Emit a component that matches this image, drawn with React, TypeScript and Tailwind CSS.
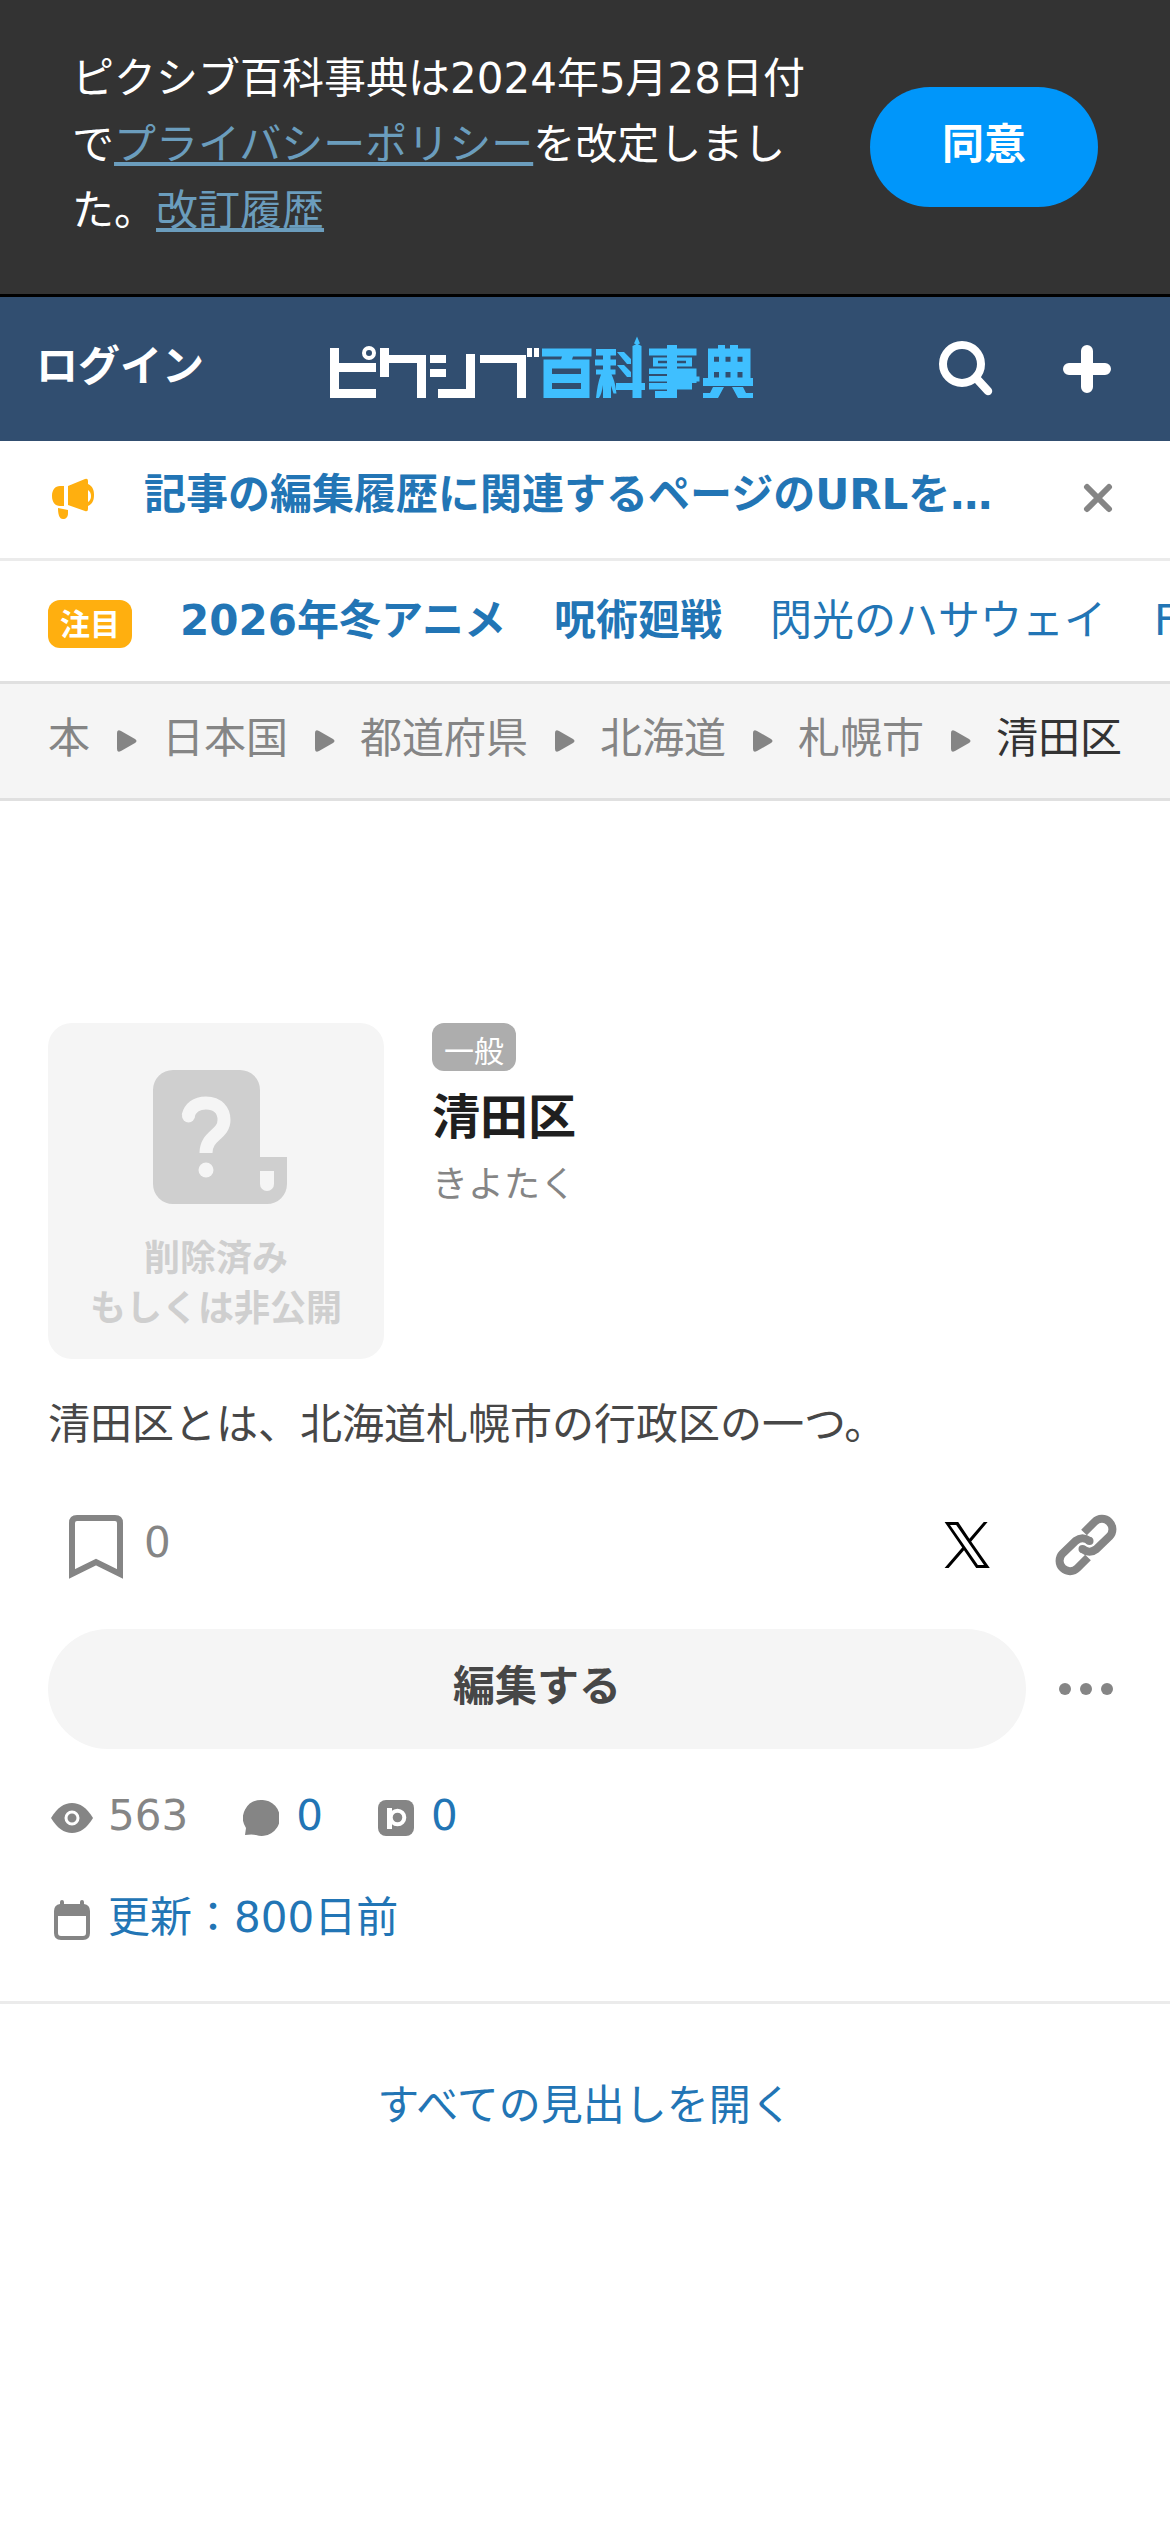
import { ReactNode } from 'react';

const trends = [
  { name: '2026年冬アニメ', hot: true },
  { name: '呪術廻戦', hot: true },
  { name: '閃光のハサウェイ', hot: false },
  { name: 'Fate', hot: false },
];

const crumbs = ['本', '日本国', '都道府県', '北海道', '札幌市'];

const Logo = () => (
  <svg width="430" height="66" viewBox="0 0 430 66" className="block">
    <g fill="#fff">
      <path d="M3 12h9v15h37v9H12v17h37v9H3z" />
      <circle cx="42" cy="17" r="5" fill="none" stroke="#fff" strokeWidth="4" />
      <path d="M53 12h9v7h37v43h-9V27H62v14h-9z" />
      <path d="M103 19h16v8h-16zM103 33h16v8h-16zM139 18h9v44h-37v-9h28z" />
      <path d="M153 19h46v43h-9V27h-37zM200 12h5v9h-5zM207 12h5v9h-5z" />
    </g>
    <g fill="#3fbfff">
      <path
        fillRule="evenodd"
        d="M215 12.500h49.500v8H246l-1 3h17.500V62h-46V23.500H234l1-3h-20zM225 32.500V38h29v-5.500zM225 47v6h29v-6z"
      />
      <path d="M269 13h20v6.500h-5.500v4h5.500v6h-5.500v4h5v5h-4c3 6 4 11 5 19h-3l-2.500-8V62H276V49c-1 6-2 10-4 13h-3c1-9 2-16 5-23.500h-5v-5h7v-4h-8v-6h8v-4h-7z" />
      <path d="M290 16h7l7 7v5h-4zM290 29h7l7 7v5h-4zM289 47h16.500V10l4-2h1l4 2v37h3.500v7h-3.500v8h-9v-8H289zM307 7.500l3-7 3 7-3 1z" />
      <path
        fillRule="evenodd"
        d="M340 9h10v3.500h19.500v7H350v2h15v9h-15v2h19.500v8h3v5h-3V47H365v6.500h-15V62h-22v-7h12v-1.500h-18V47h18v-1.500h-18v-5.500h18v-2h-18v-5.500h18v-2h-14v-9h14v-2h-18v-7h18zM331 24.700v2.600h9v-2.600zM350 24.700v2.600h9v-2.600z"
      />
      <path
        fillRule="evenodd"
        d="M381 12.500h10V9h7v3.500h5V9h8v3.500h12.500v29.500h2.500v8h-50v-8h5zM387 20.700v5h5v-5zM398.500 20.700v5h5v-5zM410.500 20.700v5h5v-5zM387 36v5.500h5V36zM398.500 36v5.500h5V36zM410.500 36v5.500h5V36z"
      />
      <path d="M386 51h11l-6 11h-15v-5h7zM405 51h11l3 6h7v5h-15z" />
    </g>
  </svg>
);

const Stat = ({ icon, children }: { icon: ReactNode; children: ReactNode }) => (
  <div className="flex items-center">
    <span className="mr-3 flex w-12 justify-center pt-1">{icon}</span>
    {children}
  </div>
);

const PolicyBanner = () => (
  <div className="flex h-[297px] items-start border-b-[3px] border-black bg-[#333] pl-[72px] text-white">
    <p className="mt-[46px] w-[750px] leading-[66px]">
      ピクシブ百科事典は2024年5月28日付で
      <a className="text-[#6b9dbd] underline">プライバシーポリシー</a>
      を改定しました。
      <a className="text-[#6b9dbd] underline">改訂履歴</a>
    </p>
    <button className="mt-[87px] ml-12 h-[120px] w-[228px] rounded-full bg-[#0096fa] pb-1 font-bold">
      同意
    </button>
  </div>
);

const Header = () => (
  <header className="flex h-36 items-center bg-[#314e70] text-white">
    <span className="ml-9 w-[291px] pb-1 font-bold">ログイン</span>
    <Logo />
    <svg
      width="60"
      height="60"
      viewBox="0 0 60 60"
      className="ml-[180px]"
      fill="none"
      stroke="#fff"
      strokeLinecap="round"
    >
      <circle cx="25" cy="25" r="19" strokeWidth="8" />
      <path d="M40 40l11 12" strokeWidth="8.500" />
    </svg>
    <svg
      width="48"
      height="48"
      viewBox="0 0 48 48"
      className="ml-[66px]"
      stroke="#fff"
      strokeWidth="12"
      strokeLinecap="round"
    >
      <path d="M24 6v36M6 24h36" />
    </svg>
  </header>
);

const Notice = () => (
  <div className="flex h-[120px] items-center border-b-[3px] border-[#ebebeb] pb-1 font-bold text-[#2275b5]">
    <svg width="48" height="48" viewBox="0 0 48 48" className="ml-12" fill="#ffaf0f">
      <path
        fillRule="evenodd"
        d="M12 12h4v20h-4c-5 0-8-4-8-10s3-10 8-10zM20 12l17-7q3-1 3 2v3c4 2 6 5 6 11s-2 9-6 11v3q0 3-3 2l-17-6zM40 16v12q3-2 3-6t-3-6z"
      />
      <path d="M10 34l10 2v3c0 4-2 6-5 6-4 0-5-5-5-11z" />
    </svg>
    <span className="ml-12 w-[936px] pb-1.5">記事の編集履歴に関連するページのURLを…</span>
    <svg
      width="36"
      height="36"
      viewBox="0 0 36 36"
      stroke="#858585"
      strokeWidth="6"
      strokeLinecap="round"
    >
      <path d="M7 7l22 22M29 7L7 29" />
    </svg>
  </div>
);

const Article = () => (
  <main className="px-12 pt-[222px]">
    <div className="flex gap-12">
      <div className="flex h-[336px] w-[336px] flex-col items-center rounded-3xl bg-[#f5f5f5] pt-[47px] text-[36px] leading-[50px] font-bold text-[#cfcfcf]">
        <svg width="136" height="134" viewBox="0 0 136 134" className="mb-[30px] ml-2">
          <path
            fill="#cfcfcf"
            d="M21 0h67a20 20 0 0 1 20 20v67h27v27a20 20 0 0 1-20 20H21a20 20 0 0 1-20-20V20A20 20 0 0 1 21 0z"
          />
          <path fill="#f5f5f5" d="M108 101h14v13a7 7 0 0 1-14 0z" />
          <path
            d="M36 46c2-8 8-13 18-13 12 0 18 8 18 17 0 15-18 15-18 33"
            fill="none"
            stroke="#f5f5f5"
            strokeWidth="13"
          />
          <circle cx="36.500" cy="46" r="6.500" fill="#f5f5f5" />
          <circle cx="54" cy="100" r="7.500" fill="#f5f5f5" />
        </svg>
        <span>削除済み</span>
        <span>もしくは非公開</span>
      </div>
      <div className="flex flex-col items-start">
        <span className="h-12 w-[84px] rounded-xl bg-[#adadad] pt-[5px] text-center text-[30px] leading-[48px] text-white">
          一般
        </span>
        <h1 className="mt-2.5 text-[48px] leading-[72px] font-bold text-[#1f1f1f]">清田区</h1>
        <p className="mt-[5px] text-[36px] leading-[54px] text-[#858585]">きよたく</p>
      </div>
    </div>
    <p className="mt-[33px] leading-[66px] text-[#474747]">清田区とは、北海道札幌市の行政区の一つ。</p>
    <div className="mt-[51px] flex h-[72px] items-center">
      <svg
        width="54"
        height="68"
        viewBox="0 0 54 68"
        className="ml-[21px]"
        fill="none"
        stroke="#858585"
        strokeWidth="6"
      >
        <path d="M3 63V12q0-5 5-5h38q5 0 5 5v51L27 51z" />
      </svg>
      <span className="ml-[21px] pb-1 text-[#858585]">0</span>
      <svg width="48" height="48" viewBox="0 0 24 24" className="ml-auto" fill="#000">
        <path d="M14.100 10.300 22.300 0.500h-1.900l-7.200 8.400L7.600 0.500H0.800l8.800 12.800-8.800 10.200h2l7.700-8.900 6.100 8.900h6.800zM3.500 2h3.100l13.900 20h-3.100z" />
      </svg>
      <svg
        width="66"
        height="66"
        viewBox="0 0 66 66"
        className="mr-[3px] ml-[62px]"
        fill="none"
        stroke="#858585"
        strokeWidth="8"
      >
        <path d="M31 20.500l10.500-10.500a10.300 10.300 0 0 1 15 14.500L43.500 37q-7 5.500-14 0" />
        <path d="M35 45.500L24.500 56a10.300 10.300 0 0 1-15-14.500L22.500 29q7-5.500 14 0" />
        <g fill="#858585" stroke="none">
          <circle cx="29.500" cy="37" r="4" />
          <circle cx="36.500" cy="29" r="4" />
        </g>
      </svg>
    </div>
    <div className="mt-12 flex items-center">
      <button className="h-[120px] w-[978px] rounded-full bg-[#f5f5f5] pb-1 font-bold text-[#474747]">
        編集する
      </button>
      <svg width="60" height="12" viewBox="0 0 60 12" className="ml-[30px]" fill="#858585">
        <circle cx="9" cy="6" r="6" />
        <circle cx="30" cy="6" r="6" />
        <circle cx="51" cy="6" r="6" />
      </svg>
    </div>
    <div className="mt-[34px] flex h-[66px] gap-12 text-[#2275b5]">
      <Stat
        icon={
          <svg width="42" height="30" viewBox="0 0 42 30">
            <path
              fill="#858585"
              d="M0 15C6 5 13 0 21 0s15 5 21 15c-6 10-13 15-21 15S6 25 0 15z"
            />
            <circle cx="21" cy="15" r="6" fill="#858585" stroke="#fff" strokeWidth="3" />
          </svg>
        }
      >
        <span className="text-[#858585]">563</span>
      </Stat>
      <Stat
        icon={
          <svg width="36" height="36" viewBox="0 0 36 36" className="ml-0.5" fill="#858585">
            <path d="M18 0a18 18 0 1 1-5 35q-4-1-11 0l1-7A18 18 0 0 1 18 0z" />
          </svg>
        }
      >
        0
      </Stat>
      <Stat
        icon={
          <svg width="36" height="36" viewBox="0 0 36 36" className="ml-0.5" fill="none">
            <rect width="36" height="36" rx="8" fill="#858585" />
            <path d="M11.500 29V8" stroke="#fff" strokeWidth="5" />
            <circle cx="19.500" cy="17.500" r="6.800" stroke="#fff" strokeWidth="4" />
          </svg>
        }
      >
        0
      </Stat>
    </div>
    <div className="mt-9 flex h-[66px] text-[#2275b5]">
      <Stat
        icon={
          <svg width="36" height="40" viewBox="0 0 36 40" fill="#858585">
            <path
              fillRule="evenodd"
              d="M6 2a2 2 0 0 1 4 0v2h16V2a2 2 0 0 1 4 0v2q6 1 6 7v22q0 7-7 7H7q-7 0-7-7V11q0-6 6-7zM4 16v17q0 3 3 3h22q3 0 3-3V16z"
            />
          </svg>
        }
      >
        更新：800日前
      </Stat>
    </div>
  </main>
);

export default function App() {
  return (
    <div className="h-[2532px] w-[1170px] overflow-hidden bg-white text-[42px] leading-[66px] [font-family:'DejaVu_Sans','Noto_Sans_CJK_JP',sans-serif]">
      <PolicyBanner />
      <Header />
      <Notice />
      <div className="flex h-[123px] items-center border-b-[3px] border-[#e0e0e0] pl-12 whitespace-nowrap text-[#2275b5]">
        <span className="mt-1.5 h-12 w-[84px] shrink-0 rounded-xl bg-[#ffaf0f] pt-px text-center text-[30px] leading-[48px] font-bold text-white">
          注目
        </span>
        {trends.map((trend) => (
          <a key={trend.name} className={`ml-12 ${trend.hot ? 'font-bold' : ''}`}>
            {trend.name}
          </a>
        ))}
      </div>
      <nav className="flex h-[117px] items-center border-b-[3px] border-[#e0e0e0] bg-[#f5f5f5] pl-12 text-[#858585]">
        {crumbs.map((crumb) => (
          <div key={crumb} className="flex items-center">
            <span className="pb-1">{crumb}</span>
            <svg width="24" height="24" viewBox="0 0 24 24" className="mx-6" fill="#858585">
              <path d="M3 4q0-4 4-2l14 8q3 2 0 4L7 22q-4 2-4-2z" />
            </svg>
          </div>
        ))}
        <span className="pb-1 text-[#333]">清田区</span>
      </nav>
      <Article />
      <div className="mt-[50px] border-t-[3px] border-[#ebebeb] pt-[69px] text-center text-[#2275b5]">
        すべての見出しを開く
      </div>
    </div>
  );
}
